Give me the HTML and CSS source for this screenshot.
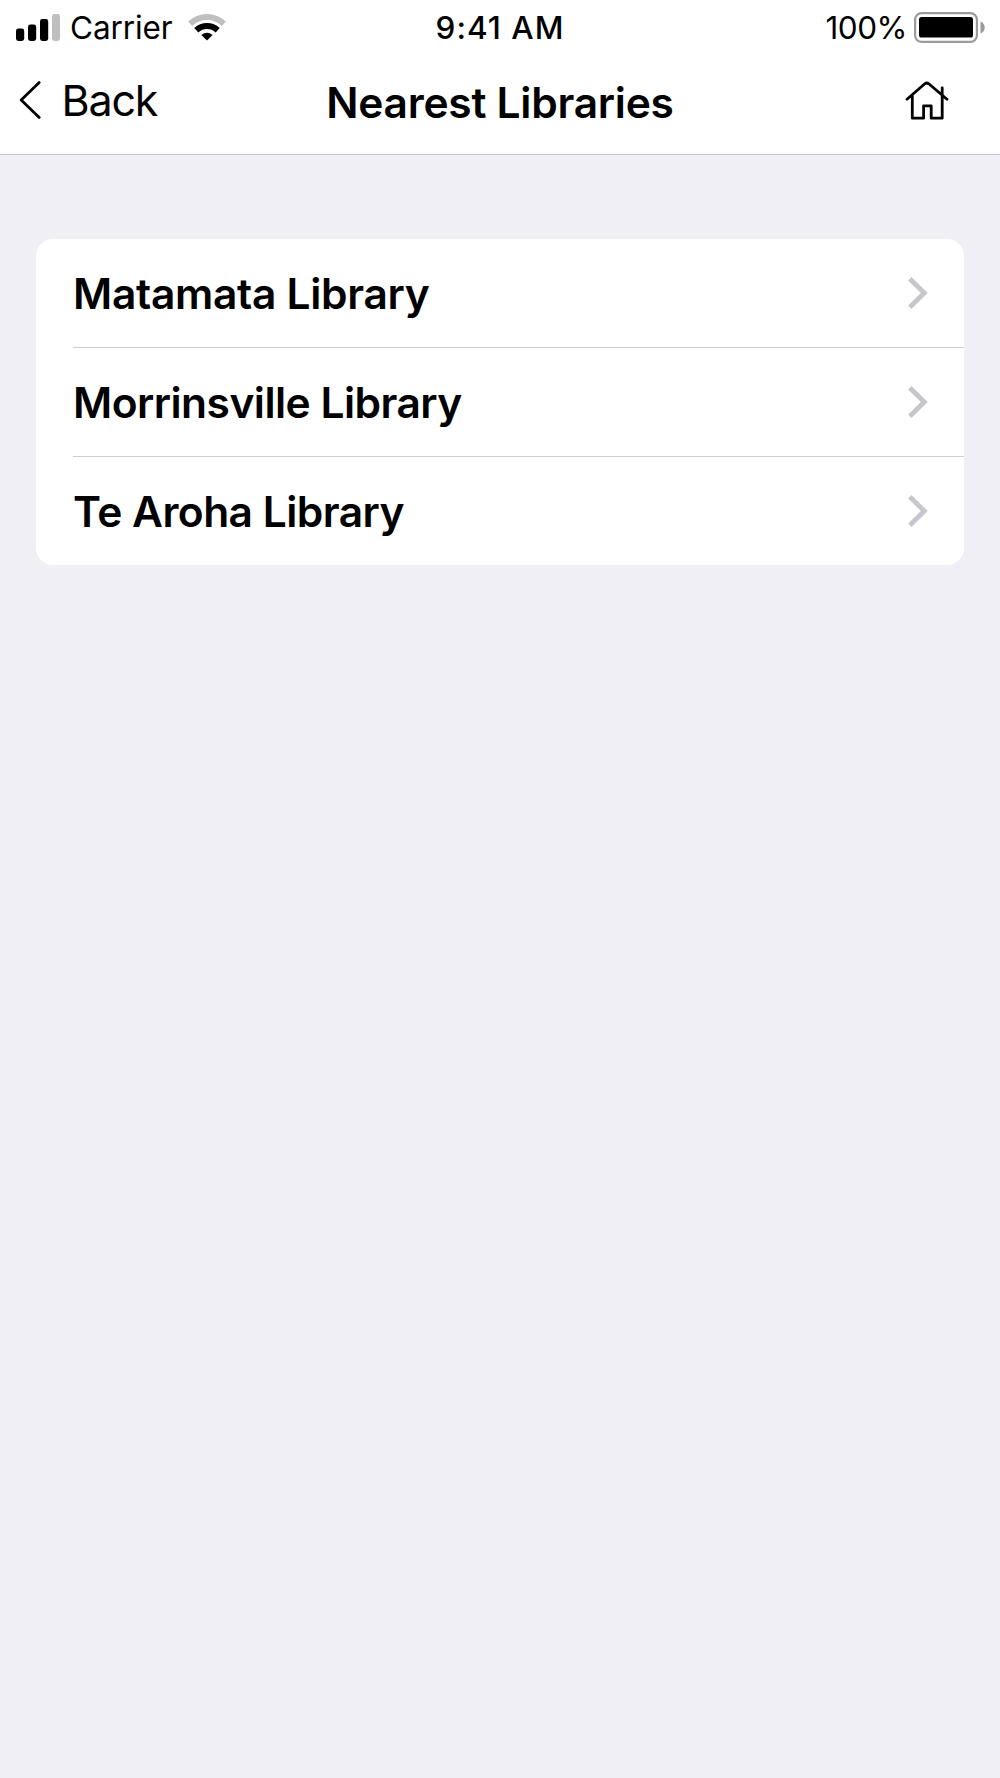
FILE: index.html
```html
<!DOCTYPE html>
<html lang="en">
<head>
<meta charset="utf-8">
<title>Nearest Libraries</title>
<link rel="stylesheet" href="styles.css">
</head>
<body>
<header class="header">
  <div class="status">
    <div class="status-left">
      <svg class="signal" width="44" height="27" viewBox="0 0 44 27">
        <rect x="0" y="14.5" width="8.2" height="12.5" rx="2.4"/>
        <rect x="12" y="10.5" width="8.2" height="16.5" rx="2.4"/>
        <rect x="24" y="5" width="8.2" height="22" rx="2.4"/>
        <rect class="dim" x="36" y="0" width="8" height="27" rx="2.4"/>
      </svg>
      <span class="carrier">Carrier</span>
      <svg class="wifi" width="38" height="27" viewBox="0 0 38 27">
        <path class="arc dim" d="M2.2 9.8A24.4 24.4 0 0 1 35.8 9.8"/>
        <path class="arc" d="M8.3 16.2A15.6 15.6 0 0 1 29.7 16.2"/>
        <path d="M19 26.6L13.4 21.1Q19 16.6 24.6 21.1Z"/>
      </svg>
    </div>
    <span class="time">9:41 AM</span>
    <div class="status-right">
      <span class="percent">100%</span>
      <svg class="battery" width="71" height="31" viewBox="0 0 71 31">
        <rect class="shell" x="1.1" y="1.1" width="61.8" height="28.8" rx="6.5"/>
        <rect x="5" y="5" width="54" height="20.6" rx="2.6"/>
        <path class="tip" d="M66.5 9.5Q70.7 11.3 70.7 15.5T66.5 21.7Z"/>
      </svg>
    </div>
  </div>
  <nav class="nav">
    <a class="back">
      <svg width="22" height="38" viewBox="0 0 22 38"><path class="line" d="M20.2 1.6L2.2 19L20.2 36.4"/></svg>
      <span class="back-label">Back</span>
    </a>
    <h1 class="title">Nearest Libraries</h1>
    <a class="home">
      <svg width="44" height="39" viewBox="0 0 44 39"><path class="line" d="M2 18.2L19.8 2.8Q21.8 1.2 23.8 2.8L42 18.2M7.3 14V37.2H18.6V24.8H26.2V37.2H37.2V6.8"/></svg>
    </a>
  </nav>
</header>
<main class="content">
  <ul class="list">
    <li class="row"><span class="name matamata">Matamata Library</span><svg class="chevron" width="20" height="32" viewBox="0 0 20 32"><path d="M1.8 1.8L16.3 16L1.8 30.2"/></svg></li>
    <li class="row"><span class="name morrinsville">Morrinsville Library</span><svg class="chevron" width="20" height="32" viewBox="0 0 20 32"><path d="M1.8 1.8L16.3 16L1.8 30.2"/></svg></li>
    <li class="row"><span class="name te-aroha">Te Aroha Library</span><svg class="chevron" width="20" height="32" viewBox="0 0 20 32"><path d="M1.8 1.8L16.3 16L1.8 30.2"/></svg></li>
  </ul>
</main>
</body>
</html>
```
FILE: styles.css
```css
* { box-sizing: border-box; }
body {
  margin: 0;
  min-height: 1778px;
  background: #f0eff5;
  color: #000;
  font-family: Inter, "Liberation Sans", sans-serif;
  white-space: nowrap;
}
svg { display: block; flex: none; }
.header { height: 155px; background: #fff; border-bottom: 1px solid #c8c7cc; }
.status {
  display: grid;
  grid-template-columns: 1fr auto 1fr;
  height: 54px;
  padding: 1px 15px 0 16px;
  font-size: 31.5px;
  line-height: 53px;
}
.status-left, .status-right { display: flex; align-items: center; }
.status-right { justify-content: flex-end; }
.carrier { margin-left: 10px; letter-spacing: -.1px; }
.wifi { margin-left: 15px; }
.time { padding-right: 1px; font-weight: 500; letter-spacing: 1px; }
.percent { letter-spacing: -.5px; }
.battery { margin-left: 7px; }
.dim { fill: #bfbfbf; }
.arc { fill: none; stroke: #000; stroke-width: 6; }
.arc.dim { stroke: #bfbfbf; }
.shell { fill: none; stroke: #9b9b9b; stroke-width: 2.2; }
.tip { fill: #9b9b9b; }
.nav {
  display: grid;
  grid-template-columns: 1fr auto 1fr;
  align-items: center;
  height: 91px;
  padding: 0 19px;
}
.back { display: flex; align-items: center; font-size: 43px; letter-spacing: -1.2px; }
.back-label { margin-left: 20.5px; padding-top: 1px; }
.title { margin: 0; padding-top: 6px; font-size: 42.5px; font-weight: 600; letter-spacing: -.26px; }
.home { justify-self: end; margin-right: 32px; padding-top: 1px; }
.line { fill: none; stroke: #000; stroke-width: 2.8; stroke-linecap: round; stroke-linejoin: round; }
.content { padding: 84px 36px 0; }
.list { margin: 0; padding: 0 0 0 37px; list-style: none; background: #fff; border-radius: 17px; }
.row { display: flex; align-items: center; justify-content: space-between; height: 108px; padding-right: 36px; }
.row + .row { height: 109px; padding-bottom: 1px; border-top: 1px solid #d0d0d2; }
.name { padding-top: 1px; font-size: 42.5px; font-weight: 600; }
.matamata { letter-spacing: -.3px; }
.morrinsville { letter-spacing: -.53px; }
.te-aroha { letter-spacing: -.53px; }
.chevron path { fill: none; stroke: #c7c6cd; stroke-width: 4.8; }
```
